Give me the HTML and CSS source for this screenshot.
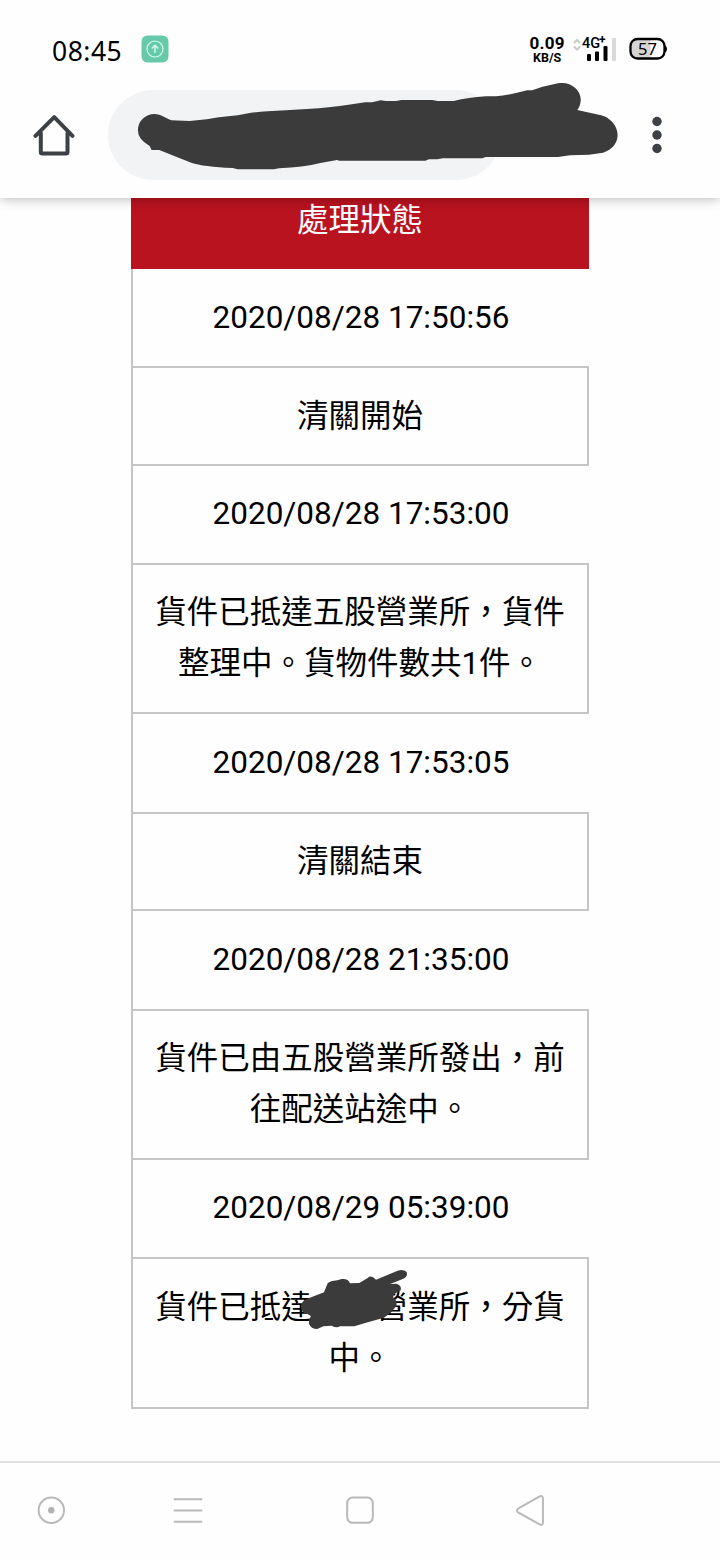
FILE: index.html
```html
<!DOCTYPE html>
<html lang="zh-Hant">
<head>
<meta charset="utf-8">
<title>貨件追蹤</title>
<link rel="stylesheet" href="styles.css">
</head>
<body>
<div class="phone">
  <header class="top">
    <div class="status">
      <span class="clock">08:45</span>
      <svg class="app-badge" viewBox="0 0 28 28"><rect x=".5" y=".5" width="27" height="27" rx="6" fill="#66c9a9"/><g fill="none" stroke="#d8fff0" stroke-width="1.2"><circle cx="14" cy="14" r="8"/><path d="M14 18V10.5M10.8 13.5L14 10.3l3.2 3.2" stroke-width="1.4"/></g></svg>
      <div class="speed"><span class="speed-value">0.09</span><span class="speed-unit">KB/S</span></div>
      <div class="signal">
        <svg class="signal-icon" viewBox="0 0 44 28"><path d="M1 9L4 5.800 7 9M1 12.500L4 15.700 7 12.500" fill="none" stroke="#c8c8c8" stroke-width="1.900"/><g><rect x="14" y="20" width="4" height="7" rx="1"/><rect x="22" y="17.500" width="4" height="9.500" rx="1"/><rect x="30.500" y="12" width="4" height="15" rx="1"/></g><rect x="39" y="4" width="4" height="23" rx="1" fill="#dadada"/></svg>
        <span class="network">4G</span><span class="plus">+</span>
      </div>
      <div class="battery">
        <svg class="battery-icon" viewBox="0 0 40 24"><rect x="2.500" y="3" width="33.500" height="18.500" rx="6.500" fill="#fff"/><path d="M9 3H21.500V21.500H9Q2.500 21.500 2.500 15V9.500Q2.500 3 9 3Z" fill="#d5d5d5"/><rect x="1.500" y="2" width="34" height="19.500" rx="7" fill="none" stroke="#000" stroke-width="2.300"/><path d="M36 8.500Q38 9 38 12T36 15.500Z"/></svg>
        <span class="battery-level">57</span>
      </div>
    </div>
    <div class="toolbar">
      <svg class="home" viewBox="0 0 42 42"><path d="M7.800 19V38Q7.800 39.500 9.300 39.500H33Q34.500 39.500 34.500 38V19M2.500 21.800L21.200 3.200 39.500 21.800" fill="none" stroke="#3d4145" stroke-width="4" stroke-linejoin="round" stroke-linecap="round"/></svg>
      <div class="address"></div>
      <svg class="menu" viewBox="0 0 10 38"><circle cx="5" cy="5.500" r="4.700"/><circle cx="5" cy="19" r="4.700"/><circle cx="5" cy="32.500" r="4.700"/></svg>
    </div>
    <svg class="address-mark" viewBox="0 0 1568 390" preserveAspectRatio="none"><path d="M110 181C110 153 132 132 158 132C177 132 192 145 207 151L260 153 310 148 345 142 400 136 435 129Q470 124 540 121L635 115Q690 110 770 97L790 97 815 91 830 93H860L875 90H965L980 93H1027Q1070 82 1120 79H1150Q1190 75 1240 61L1255 61 1285 50 1330 40C1365 33 1396 58 1396 89Q1395 108 1386 120L1455 136C1480 142 1503 167 1503 195C1503 223 1480 247 1450 250L1420 254 1365 256 1330 261H1120L1110 265H995L980 268H955L945 272H695L688 270 640 279Q590 292 520 295L505 298H400L385 294Q300 290 265 278L172 240H150L144 228Q110 208 110 181Z"/></svg>
  </header>
  <main class="page">
    <div class="tracking">
      <div class="heading">處理狀態</div>
      <div class="time">2020/08/28 17:50:56</div>
      <div class="event">清關開始</div>
      <div class="time">2020/08/28 17:53:00</div>
      <div class="event event-tall">貨件已抵達五股營業所，貨件<br>整理中。貨物件數共1件。</div>
      <div class="time">2020/08/28 17:53:05</div>
      <div class="event">清關結束</div>
      <div class="time">2020/08/28 21:35:00</div>
      <div class="event event-tall">貨件已由五股營業所發出，前<br>往配送站途中。</div>
      <div class="time">2020/08/29 05:39:00</div>
      <div class="event event-tall">貨件已抵達<span class="hidden-name"></span>營業所，分貨<br>中。
        <svg class="name-mark" viewBox="0 0 1440 540"><path d="M543 199Q543 187 558 178L612 157 623 130Q630 123 652 121L665 117Q685 115 690 130L718 129 743 114Q753 103 768 119L833 92Q849 86 860 96Q864 110 850 116L810 132 830 131Q846 137 842 151L823 162 819 172Q833 181 829 198L815 215 792 233 765 241 738 248 703 259H660Q650 266 635 257L610 259 592 267Q573 267 567 251Q565 239 573 228L562 222Q543 219 543 199Z"/></svg>
      </div>
    </div>
  </main>
  <nav class="nav">
    <svg class="nav-icons" viewBox="0 0 720 98"><g fill="none" stroke="#b9b9b9" stroke-width="2"><circle cx="51.300" cy="48.300" r="12.700"/><path d="M174.500 37.300H201.500M174.500 48.600H201.500M174.500 59.800H201.500" stroke-linecap="round"/><rect x="347.200" y="35.500" width="25.600" height="25.300" rx="5.500"/><path d="M518.500 46.300L539.600 34.500Q542.900 33 542.900 36.500V60.500Q542.900 64 539.600 62.300L518.500 50.700Q515.500 48.500 518.500 46.300Z"/></g><circle cx="51.300" cy="48.300" r="3.200" fill="#b3b3b3"/></svg>
  </nav>
</div>
</body>
</html>
```
FILE: styles.css
```css
* { box-sizing: border-box; }
body { margin: 0; background: #fefefe; }
svg { display: block; flex: none; }
.phone {
  width: 720px;
  height: 1560px;
  display: flex;
  flex-direction: column;
  overflow: hidden;
  color: #000;
  font-family: Roboto, "Noto Sans CJK TC", sans-serif;
}
.top {
  position: relative;
  z-index: 1;
  flex: none;
  height: 198px;
  background: #fefefe;
  box-shadow: 0 0 12px rgba(0, 0, 0, .32);
}
.status {
  height: 90px;
  padding: 8px 51px 0 52px;
  display: flex;
  align-items: center;
}
.clock {
  width: 90px;
  padding-top: 4px;
  font: 26.500px/32px "Noto Sans", sans-serif;
  letter-spacing: .5px;
  white-space: nowrap;
}
.app-badge { width: 28px; height: 28px; }
.speed {
  width: 38px;
  margin: 2px 0 0 359px;
  display: flex;
  flex-direction: column;
  align-items: center;
  font-weight: 700;
}
.speed-value { font-size: 17px; line-height: 15px; letter-spacing: .3px; }
.speed-unit { font-size: 12.500px; line-height: 13px; }
.signal { position: relative; margin: -2px 0 0 7px; }
.signal-icon { width: 44px; height: 28px; }
.network, .plus { position: absolute; line-height: 1; }
.network { left: 9px; top: 3px; font-size: 14.500px; font-weight: 500; }
.plus { left: 26px; top: 0; font-size: 12px; font-weight: 700; }
.battery { position: relative; margin: 0 0 0 12px; }
.battery-icon { width: 40px; height: 24px; }
.battery-level {
  position: absolute;
  left: 0;
  top: 3px;
  width: 37px;
  font: 16.500px/18px "Noto Sans", sans-serif;
  text-align: center;
}
.toolbar { height: 90px; padding-left: 33px; display: flex; align-items: center; }
.home { width: 42px; height: 42px; }
.address {
  width: 393px;
  height: 90px;
  margin-left: 33px;
  border-radius: 45px;
  background: #f1f3f5;
}
.menu { width: 10px; height: 38px; margin-left: 151px; fill: #3d4145; }
.address-mark {
  position: absolute;
  left: 100px;
  top: 70px;
  width: 540px;
  height: 130px;
  fill: #3b3b3b;
}
.page { flex: 1; padding: 0 131px; }
.tracking { font-size: 31.500px; line-height: 51px; text-align: center; }
.heading {
  height: 71px;
  padding: 1px 0 26px;
  line-height: 44px;
  background: #b8131f;
  color: #fff;
}
.time {
  height: 97.300px;
  padding-top: 22.500px;
  border-left: 2px solid #c5c5c5;
}
.event {
  position: relative;
  height: 99.600px;
  padding-top: 22.300px;
  border: 2px solid #c5c5c5;
}
.event-tall { height: 151.300px; }
.hidden-name { display: inline-block; width: 2em; }
.name-mark {
  position: absolute;
  left: -13px;
  top: -19px;
  width: 480px;
  height: 180px;
  fill: #3b3b3b;
}
.nav { flex: none; height: 99px; border-top: 2px solid #e1e1e1; }
.nav-icons { width: 720px; height: 98px; margin-top: -1px; }
```
